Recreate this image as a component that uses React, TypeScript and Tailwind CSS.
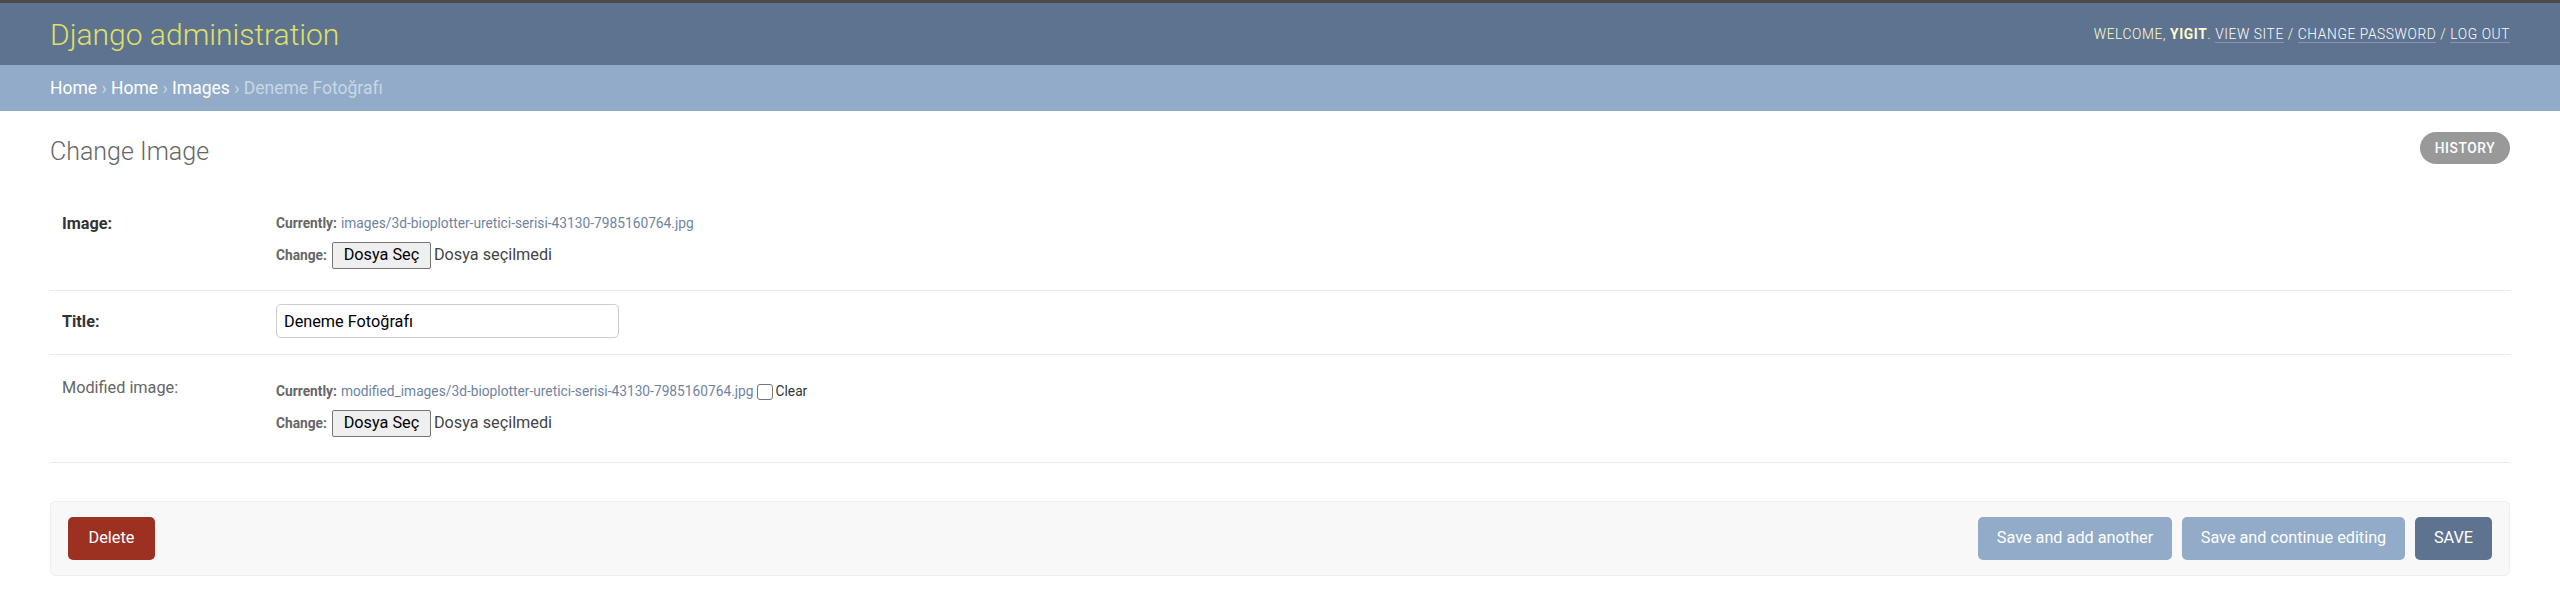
import React from "react";

function Crumbs() {
  return (
    <nav className="h-[46px] bg-[#91abc8] px-[50px] text-[17.5px] leading-[46px] text-[#c9d7e7]">
      <a className="text-white">Home</a> › <a className="text-white">Home</a> ›{" "}
      <a className="text-white">Images</a> › Deneme Fotoğrafı
    </nav>
  );
}

function FileButton() {
  return (
    <span className="flex items-center">
      <span className="flex h-[27px] w-[99px] items-center justify-center rounded-[2px] border border-[#767676] bg-[#efefef] text-[16.25px] text-black">
        Dosya Seç
      </span>
      <span className="ml-[3px] text-[16.25px] text-[#444]">Dosya seçilmedi</span>
    </span>
  );
}

function FileField({ path, clearable = false }: any) {
  return (
    <div className="flex flex-col">
      <p className="flex h-[25px] items-center text-[13.75px] text-[#666]">
        <span className="font-bold">Currently:</span>
        <a className="ml-[4px] text-[#6f84a1]">{path}</a>
        {clearable ? (
          <>
            <span className="ml-[3px] h-[16px] w-[16px] rounded-[3px] border border-[#767676] bg-white" />
            <span className="ml-[3px] text-[#333]">Clear</span>
          </>
        ) : null}
      </p>
      <p className="mt-[6px] flex h-[27px] items-center text-[13.75px] text-[#666]">
        <span className="mr-[5px] font-bold">Change:</span>
        <FileButton />
      </p>
    </div>
  );
}

export default function App() {
  return (
    <div className="min-h-[592px] bg-white font-[Roboto,sans-serif] text-[#333]">
      <div className="h-[3px] bg-[#4a4a4a]" />
      <header className="flex h-[62px] items-center justify-between bg-[#5e7390] px-[50px]">
        <h1 className="text-[30px] font-light text-[#dfe066]">Django administration</h1>
        <div className="text-[13.75px] font-light uppercase tracking-[0.6px] text-[#ffc]">
          Welcome, <strong className="font-bold">yigit</strong>.{" "}
          <a className="border-b border-white/25 text-white">View site</a> /{" "}
          <a className="border-b border-white/25 text-white">Change password</a> /{" "}
          <a className="border-b border-white/25 text-white">Log out</a>
        </div>
      </header>
      <Crumbs />

      <div className="px-[50px] pt-[21px]">
        <div className="flex items-start justify-between">
          <h1 className="mt-[5px] text-[25px] leading-[30px] font-light text-[#666]">Change Image</h1>
          <a className="flex h-[32px] w-[90px] items-center justify-center rounded-full bg-[#999] text-[13.75px] font-medium tracking-[0.6px] text-white uppercase">
            History
          </a>
        </div>

        <div className="mt-[21px]">
          <div className="flex border-b border-[#eaeaea] pt-[23px] pb-[21px] pl-[12px]">
            <label className="w-[214px] text-[16.25px] leading-[25px] font-bold text-[#333]">Image:</label>
            <FileField path="images/3d-bioplotter-uretici-serisi-43130-7985160764.jpg" />
          </div>

          <div className="flex items-center border-b border-[#eaeaea] pt-[13px] pb-[16px] pl-[12px]">
            <label className="w-[214px] pt-[3px] text-[16.25px] font-bold text-[#333]">Title:</label>
            <input
              type="text"
              defaultValue="Deneme Fotoğrafı"
              className="h-[34px] w-[343px] rounded-[5px] border border-[#ccc] px-[7px] text-[16.25px] text-black"
            />
          </div>

          <div className="flex border-b border-[#eaeaea] pt-[24px] pb-[25px] pl-[12px]">
            <label className="-mt-[4px] w-[214px] text-[16.25px] leading-[25px] text-[#666]">Modified image:</label>
            <FileField
              path="modified_images/3d-bioplotter-uretici-serisi-43130-7985160764.jpg"
              clearable
            />
          </div>
        </div>

        <div className="mt-[38px] flex items-center justify-between rounded-[5px] border border-[#eee] bg-[#f8f8f8] px-[17px] py-[15px]">
          <a className="flex h-[43px] w-[87px] items-center justify-center rounded-[5px] bg-[#9c3122] text-[16.25px] text-white">
            Delete
          </a>
          <div className="flex gap-[10px]">
            <button className="h-[43px] w-[194px] rounded-[5px] bg-[#91abc8] text-[16.25px] text-white">
              Save and add another
            </button>
            <button className="h-[43px] w-[223px] rounded-[5px] bg-[#91abc8] text-[16.25px] text-white">
              Save and continue editing
            </button>
            <button className="h-[43px] w-[77px] rounded-[5px] bg-[#5e7390] text-[16.25px] text-white uppercase">
              Save
            </button>
          </div>
        </div>
      </div>
    </div>
  );
}
